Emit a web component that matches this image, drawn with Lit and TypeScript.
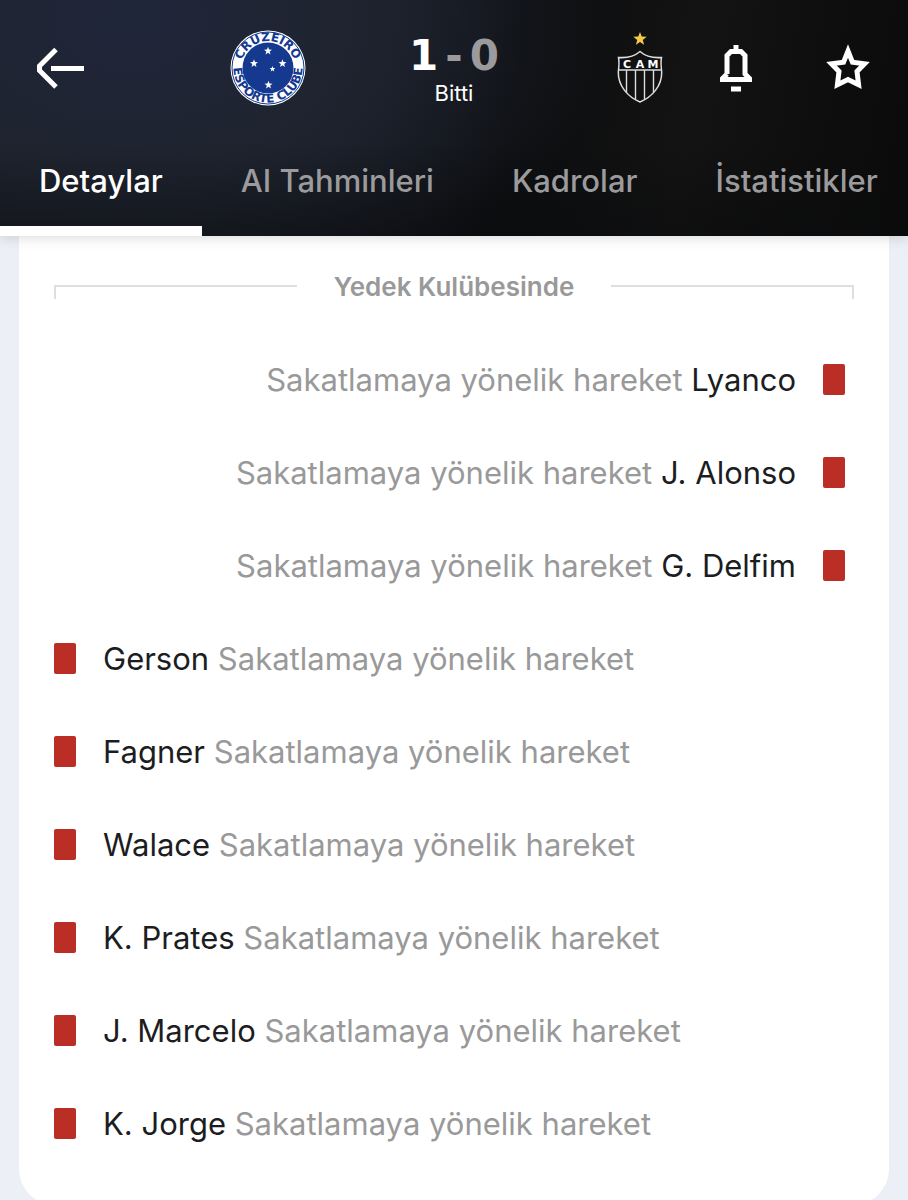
import { LitElement, html, css, svg } from "lit";
import { customElement, property, state } from "lit/decorators.js";

interface Incident {
  player: string;
  side: "home" | "away";
}

const REASON = "Sakatlamaya yönelik hareket";

const INCIDENTS: Incident[] = [
  { player: "Lyanco", side: "away" },
  { player: "J. Alonso", side: "away" },
  { player: "G. Delfim", side: "away" },
  { player: "Gerson", side: "home" },
  { player: "Fagner", side: "home" },
  { player: "Walace", side: "home" },
  { player: "K. Prates", side: "home" },
  { player: "J. Marcelo", side: "home" },
  { player: "K. Jorge", side: "home" },
];

const TABS = ["Detaylar", "AI Tahminleri", "Kadrolar", "İstatistikler"];

const starPath = (cx: number, cy: number, r: number): string => {
  const points: string[] = [];
  for (let i = 0; i < 10; i++) {
    const radius = i % 2 === 0 ? r : r * 0.42;
    const angle = -Math.PI / 2 + (i * Math.PI) / 5;
    points.push(
      `${(cx + radius * Math.cos(angle)).toFixed(2)} ${(cy + radius * Math.sin(angle)).toFixed(2)}`
    );
  }
  return `M${points.join("L")}Z`;
};

@customElement("incident-row")
class IncidentRow extends LitElement {
  @property() player = "";
  @property() reason = "";
  @property() side: "home" | "away" = "home";

  static styles = css`
    :host {
      display: block;
    }
    .row {
      display: flex;
      align-items: center;
      gap: 27px;
      height: 93px;
      font-size: 31px;
      line-height: 40px;
      color: #999;
    }
    .home {
      padding-left: 35px;
    }
    .away {
      flex-direction: row-reverse;
      padding-right: 44px;
    }
    .card {
      flex: none;
      width: 22px;
      height: 31px;
      border-radius: 2px;
      background: #ba2e26;
    }
    .player {
      color: #1c1d1f;
    }
  `;

  render() {
    const name = html`<span class="player">${this.player}</span>`;
    return html`
      <div class="row ${this.side}">
        <span class="card" role="img" aria-label="Kırmızı kart"></span>
        ${this.side === "home"
          ? html`<span>${name} ${this.reason}</span>`
          : html`<span>${this.reason} ${name}</span>`}
      </div>
    `;
  }
}

@customElement("home-crest")
class HomeCrest extends LitElement {
  static styles = css`
    :host {
      display: block;
    }
    .crest {
      display: block;
      width: 76px;
      height: 76px;
    }
    .letters {
      font: bold 12px "DejaVu Sans", Verdana, sans-serif;
      fill: #14398f;
    }
  `;

  render() {
    return html`
      <svg class="crest" viewBox="0 0 76 76" role="img" aria-label="Cruzeiro">
        <defs>
          <path id="top" d="M18.900 57.100A27 27 0 1 1 57.100 57.100" />
          <path id="bottom" d="M6.200 25A34.400 34.400 0 1 0 69.800 25" />
        </defs>
        <circle cx="38" cy="38" r="37.5" fill="#fff" />
        <circle cx="38" cy="38" r="36" fill="none" stroke="#14398f" stroke-width="1" />
        <circle cx="38" cy="38" r="25.5" fill="#14398f" />
        ${[
          [38, 21, 4.2],
          [24, 33.5, 4.2],
          [52.5, 33.5, 4.2],
          [42.5, 39, 3],
          [38.5, 55, 4.2],
        ].map(([x, y, r]) => svg`<path d=${starPath(x, y, r)} fill="#fff" />`)}
        <text class="letters" text-anchor="middle">
          <textPath href="#top" startOffset="50%">CRUZEIRO</textPath>
        </text>
        <text class="letters" text-anchor="middle">
          <textPath href="#bottom" startOffset="50%">ESPORTE CLUBE</textPath>
        </text>
      </svg>
    `;
  }
}

@customElement("away-crest")
class AwayCrest extends LitElement {
  static styles = css`
    :host {
      display: block;
    }
    .crest {
      display: block;
      width: 76px;
      height: 76px;
    }
    .letters {
      font: bold 11px "DejaVu Sans", Verdana, sans-serif;
      fill: #fff;
    }
  `;

  render() {
    return html`
      <svg class="crest" viewBox="0 0 76 76" role="img" aria-label="Atlético Mineiro">
        <path d=${starPath(38, 9, 7)} fill="#f6c945" />
        <path
          d="M38 21.5Q46 28.500 59.500 27.500Q58.500 32 59.700 42C60 56 50 67 38 72C26 67 16 56 16.300 42Q17.500 32 16.500 27.500Q30 28.500 38 21.500Z"
          fill="#111"
          stroke="#ddd"
          stroke-width="1.5"
        />
        <path
          d="M16.500 40H59.500M24.500 40V62.500M33.500 40V69.500M42.500 40V69.500M51.500 40V62.500"
          fill="none"
          stroke="#ddd"
          stroke-width="1.4"
        />
        <text class="letters" y="37.5" text-anchor="middle">
          <tspan x="25">C</tspan><tspan x="38">A</tspan><tspan x="51">M</tspan>
        </text>
      </svg>
    `;
  }
}

@customElement("app-root")
class AppRoot extends LitElement {
  @state() private active = TABS[0];

  static styles = css`
    :host {
      display: flex;
      flex-direction: column;
      height: 100vh;
      overflow: hidden;
      background: #eceff5;
      font-family: Inter, Roboto, sans-serif;
    }
    .header {
      flex: none;
      z-index: 1;
      color: #fff;
      background:
        linear-gradient(transparent 60%, rgba(10, 11, 13, 0.5)),
        radial-gradient(ellipse 480px 320px at 130px 20px, #20263a, #1f2430 45%, transparent),
        linear-gradient(100deg, #1b1f28 0%, #1b1f28 25%, #0c0d0f 56%, #131313 75%, #0a0a0a 100%);
      box-shadow: 0 2px 12px rgba(0, 0, 0, 0.14);
    }
    .bar {
      display: grid;
      grid-template-columns: 1fr auto 1fr;
      align-items: center;
      height: 136px;
      padding: 0 36px;
    }
    .match {
      display: grid;
      grid-template-columns: 76px 296px 76px;
      align-items: center;
    }
    .result {
      padding-top: 3px;
      text-align: center;
    }
    .score {
      display: flex;
      justify-content: center;
      gap: 7px;
      font: bold 42px/46px "DejaVu Sans", sans-serif;
    }
    .muted {
      color: #9b9b9d;
    }
    .status {
      font-size: 22px;
      line-height: 28px;
    }
    .actions {
      display: flex;
      justify-content: flex-end;
      gap: 64px;
    }
    .icon-button {
      display: block;
      padding: 0;
      border: 0;
      background: none;
      color: inherit;
      cursor: pointer;
    }
    .icon {
      display: block;
      width: 48px;
      height: 48px;
      fill: none;
      stroke: currentColor;
      stroke-width: 5px;
    }
    .tabs {
      display: flex;
      height: 100px;
      overflow: hidden;
    }
    .tab {
      flex: none;
      height: 100px;
      padding: 0 39px;
      border: 0;
      border-bottom: 10px solid transparent;
      background: none;
      color: #9b9b9d;
      font: 500 31px/40px Inter, Roboto, sans-serif;
      white-space: nowrap;
      cursor: pointer;
    }
    .active {
      color: #fff;
      border-bottom-color: #fff;
    }
    .content {
      flex: 1;
      min-height: 0;
      overflow-y: auto;
      scrollbar-width: none;
      padding: 0 19px;
    }
    .panel {
      padding: 31px 0 35px;
      border-radius: 0 0 36px 36px;
      background: #fff;
    }
    .heading {
      display: flex;
      align-items: center;
      gap: 37px;
      margin: 0 35px 26px;
      font-weight: 600;
      font-size: 26px;
      line-height: 40px;
      color: #999;
    }
    .rule {
      flex: 1;
      height: 12px;
      margin-top: 10px;
      border-top: 2px solid #dedede;
    }
    .start {
      border-left: 2px solid #dedede;
    }
    .end {
      border-right: 2px solid #dedede;
    }
    .title {
      margin: 0;
      font: inherit;
    }
  `;

  render() {
    return html`
      <header class="header">
        <div class="bar">
          <button class="icon-button" aria-label="Geri">
            <svg class="icon" viewBox="0 0 48 48">
              <path d="M20 5.500L3.500 22V26.500L20 43M15 24.500H48" />
            </svg>
          </button>
          <div class="match">
            <home-crest></home-crest>
            <div class="result">
              <div class="score">
                <span>1</span><span class="muted">-</span><span class="muted">0</span>
              </div>
              <div class="status">Bitti</div>
            </div>
            <away-crest></away-crest>
          </div>
          <div class="actions">
            <button class="icon-button" aria-label="Bildirimler">
              <svg class="icon" viewBox="0 0 48 48">
                <path
                  d="M24 1V8M15 30V11.500L19 7.500H29L33 11.500V30L37.500 34.500V35.500H10.500V34.500L15 30M19 45H29"
                />
              </svg>
            </button>
            <button class="icon-button" aria-label="Favorilere ekle">
              <svg class="icon" viewBox="0 0 48 48">
                <path
                  d="M24 7L28.500 18.300L40.500 19.800L33 27.500L34.600 40.800L24 35.500L13.400 40.800L15 27.500L7.500 19.800L19.500 18.300Z"
                />
              </svg>
            </button>
          </div>
        </div>
        <nav class="tabs">
          ${TABS.map(
            (tab) => html`
              <button
                class="tab ${tab === this.active ? "active" : ""}"
                @click=${() => (this.active = tab)}
              >
                ${tab}
              </button>
            `
          )}
        </nav>
      </header>
      <main class="content">
        <section class="panel">
          <div class="heading">
            <span class="rule start"></span>
            <h2 class="title">Yedek Kulübesinde</h2>
            <span class="rule end"></span>
          </div>
          ${INCIDENTS.map(
            (item) => html`
              <incident-row .player=${item.player} .side=${item.side} .reason=${REASON}></incident-row>
            `
          )}
        </section>
      </main>
    `;
  }
}
